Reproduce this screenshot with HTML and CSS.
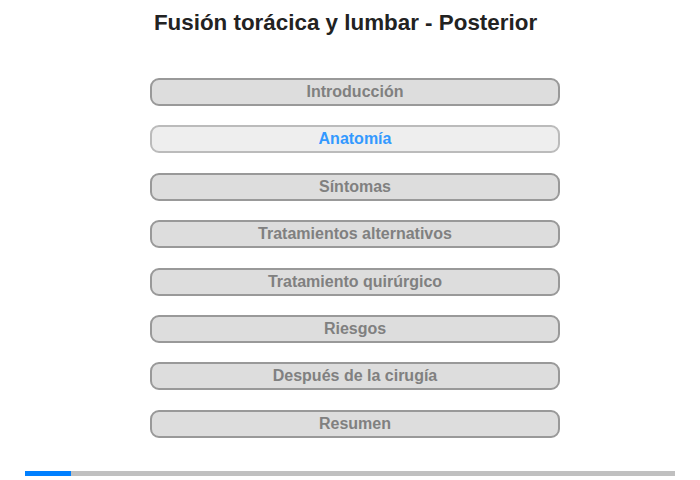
FILE: index.html
```html
<!DOCTYPE html>
<html lang="es">
<head>
    <meta charset="UTF-8">
    <meta name="viewport" content="width=device-width, initial-scale=1.0">
    <title>Fusión torácica y lumbar - Posterior</title>
    <link rel="stylesheet" href="styles.css">
</head>
<body>
    <h1>Fusión torácica y lumbar - Posterior</h1>
    <div class="menu">
        <div class="item">Introducción</div>
        <div class="item active">Anatomía</div>
        <div class="item">Síntomas</div>
        <div class="item">Tratamientos alternativos</div>
        <div class="item">Tratamiento quirúrgico</div>
        <div class="item">Riesgos</div>
        <div class="item">Después de la cirugía</div>
        <div class="item">Resumen</div>
    </div>
    <div class="progress">
        <div class="progress-fill" style="width: 7%"></div>
    </div>
</body>
</html>
```

FILE: styles.css
```css
body {
    font-family: 'Liberation Sans', Arial, sans-serif;
    background-color: #ffffff;
    margin: 0;
    padding: 0;
    width: 700px;
    height: 480px;
}
h1 {
    color: #222222;
    font-size: 22.4px;
    font-weight: bold;
    text-align: center;
    margin: 0 0 0 -9px;
    padding-top: 10px;
    height: 78px;
    line-height: 25px;
    box-sizing: border-box;
}
.menu {
    display: flex;
    flex-direction: column;
    align-items: center;
    gap: 19.4px;
    padding-left: 10px;
}
.item {
    width: 406px;
    height: 24px;
    line-height: 24px;
    border: 2px solid #999999;
    border-radius: 9px;
    background-color: #dddddd;
    color: #808080;
    font-size: 16px;
    font-weight: bold;
    text-align: center;
}
.item.active {
    background-color: #eeeeee;
    border-color: #bbbbbb;
    color: #3399ff;
}
.progress {
    margin: 33px 25px 0;
    height: 5px;
    background-color: #c0c0c0;
}
.progress-fill {
    height: 100%;
    background-color: #0080ff;
}
```
